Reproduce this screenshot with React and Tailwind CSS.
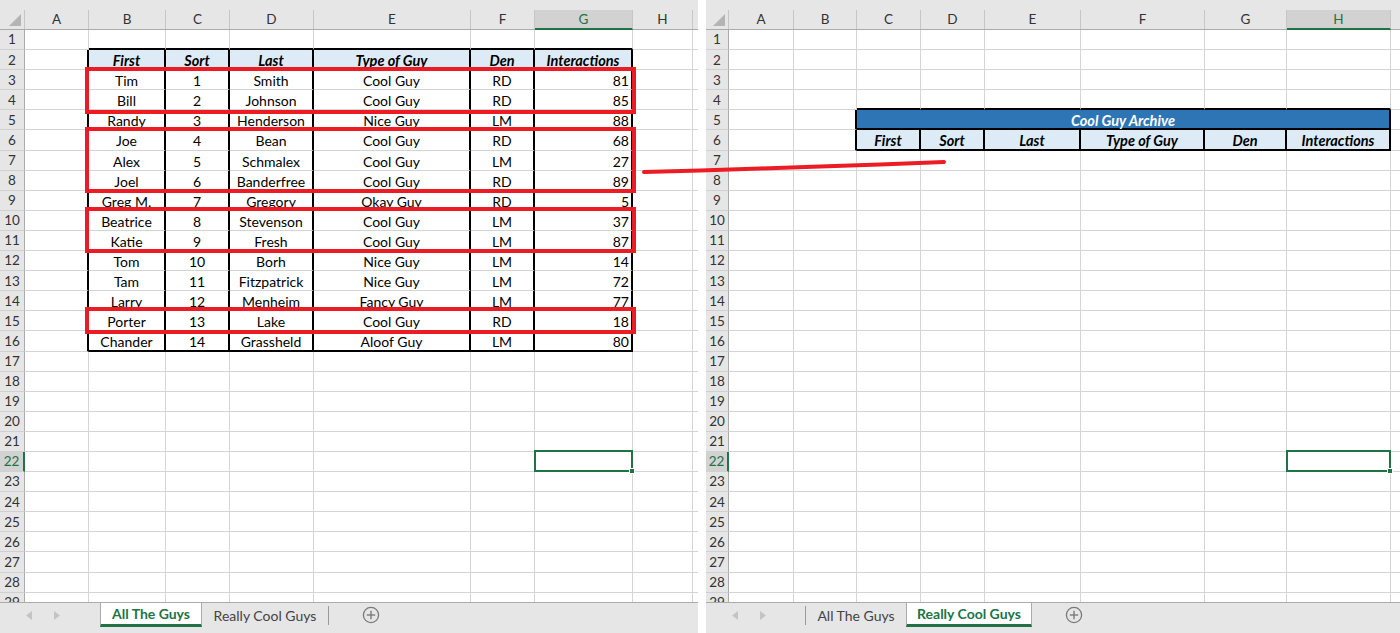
import React from 'react';

const LEFT_COLS = [
  { l: 'A', w: 'w-[64px]' },
  { l: 'B', w: 'w-[77px]' },
  { l: 'C', w: 'w-[64px]' },
  { l: 'D', w: 'w-[84px]' },
  { l: 'E', w: 'w-[157px]' },
  { l: 'F', w: 'w-[64px]' },
  { l: 'G', w: 'w-[98px]' },
  { l: 'H', w: 'w-[60px]' },
  { l: '', w: 'w-[64px]' },
];

const RIGHT_COLS = [
  { l: 'A', w: 'w-[65px]' },
  { l: 'B', w: 'w-[63px]' },
  { l: 'C', w: 'w-[64px]' },
  { l: 'D', w: 'w-[64px]' },
  { l: 'E', w: 'w-[96px]' },
  { l: 'F', w: 'w-[124px]' },
  { l: 'G', w: 'w-[82px]' },
  { l: 'H', w: 'w-[104px]' },
  { l: '', w: 'w-[64px]' },
];

const HEADERS = ['First', 'Sort', 'Last', 'Type of Guy', 'Den', 'Interactions'];

const DATA = [
  ['Tim', '1', 'Smith', 'Cool Guy', 'RD', '81'],
  ['Bill', '2', 'Johnson', 'Cool Guy', 'RD', '85'],
  ['Randy', '3', 'Henderson', 'Nice Guy', 'LM', '88'],
  ['Joe', '4', 'Bean', 'Cool Guy', 'RD', '68'],
  ['Alex', '5', 'Schmalex', 'Cool Guy', 'LM', '27'],
  ['Joel', '6', 'Banderfree', 'Cool Guy', 'RD', '89'],
  ['Greg M.', '7', 'Gregory', 'Okay Guy', 'RD', '5'],
  ['Beatrice', '8', 'Stevenson', 'Cool Guy', 'LM', '37'],
  ['Katie', '9', 'Fresh', 'Cool Guy', 'LM', '87'],
  ['Tom', '10', 'Borh', 'Nice Guy', 'LM', '14'],
  ['Tam', '11', 'Fitzpatrick', 'Nice Guy', 'LM', '72'],
  ['Larry', '12', 'Menheim', 'Fancy Guy', 'LM', '77'],
  ['Porter', '13', 'Lake', 'Cool Guy', 'RD', '18'],
  ['Chander', '14', 'Grassheld', 'Aloof Guy', 'LM', '80'],
];

const ROWS = Array.from({ length: 29 }, (_, i) => i + 1);

function Cell({ w, right, bottom, bg, align, hdr, white, sel, children }) {
  const rb = right === 'black' ? 'border-r-2 border-r-black' : 'border-r border-r-[#d4d4d4]';
  const bb = bottom === 'black' ? 'border-b-2 border-b-black' : 'border-b border-b-[#d4d4d4]';
  const al = align === 'right' ? 'justify-end pr-[2px]' : 'justify-center';
  return (
    <div className={`relative shrink-0 box-border flex items-start ${w} ${rb} ${bb} ${bg || ''} ${al}`}>
      {children != null && (
        <span
          className={`whitespace-nowrap leading-[20px] pt-[1px] ${
            hdr ? 'font-bold italic text-[14.5px]' : 'text-[14px]'
          } ${white ? 'text-white' : 'text-black'}`}
        >
          {children}
        </span>
      )}
      {sel && (
        <div className="absolute -left-[1px] -top-[2px] w-[calc(100%+2px)] h-[calc(100%+3px)] border-2 border-[#217346] z-10">
          <div className="absolute -right-[4px] -bottom-[4px] w-[6px] h-[6px] bg-[#217346] border border-white" />
        </div>
      )}
    </div>
  );
}

function leftCell(r, c) {
  const tc = c >= 1 && c <= 6;
  const tr = r >= 2 && r <= 16;
  const o = { right: 'grid', bottom: 'grid' };
  if (tr && (c === 0 || tc)) o.right = 'black';
  if (tc && (r === 1 || r === 2 || r === 16)) o.bottom = 'black';
  if (r === 2 && tc) {
    o.bg = 'bg-[#ddebf7]';
    o.hdr = true;
    o.content = HEADERS[c - 1];
  }
  if (r >= 3 && r <= 16 && tc) {
    o.content = DATA[r - 3][c - 1];
    if (c === 6) o.align = 'right';
  }
  if (r === 22 && c === 6) o.sel = true;
  return o;
}

function rightCell(r, c) {
  const tc = c >= 2 && c <= 7;
  const o = { right: 'grid', bottom: 'grid' };
  if (r === 4 && tc) o.bottom = 'black';
  if ((r === 5 || r === 6) && c === 1) o.right = 'black';
  if (r === 6 && tc) {
    o.right = 'black';
    o.bottom = 'black';
    o.bg = 'bg-[#ddebf7]';
    o.hdr = true;
    o.content = HEADERS[c - 2];
  }
  if (r === 22 && c === 7) o.sel = true;
  return o;
}

function ColHeader({ cols, rhw, selCol }) {
  return (
    <div className="flex h-[19px] shrink-0 bg-[#e6e6e6] border-b border-b-[#ababab] box-content">
      <div className={`${rhw} shrink-0 relative border-r border-r-[#c6c6c6]`}>
        <svg className="absolute right-[3px] bottom-[3px]" width="12" height="12" viewBox="0 0 12 12">
          <polygon points="12,0 12,12 0,12" fill="#b4b4b4" />
        </svg>
      </div>
      {cols.map((c, i) => (
        <div
          key={i}
          className={`${c.w} shrink-0 box-border flex items-center justify-center text-[13.5px] border-r border-r-[#c6c6c6] ${
            i === selCol
              ? 'bg-[#d2d2d2] text-[#217346] border-b-2 border-b-[#217346] -mb-px h-[20px]'
              : 'text-[#333]'
          }`}
        >
          {c.l}
        </div>
      ))}
    </div>
  );
}

function RowHeader({ rhw, r, sel }) {
  return (
    <div
      className={`${rhw} shrink-0 box-border flex items-center justify-center text-[13.5px] border-b border-b-[#d0d0d0] ${
        sel
          ? 'bg-[#d2d2d2] text-[#217346] border-r-2 border-r-[#217346]'
          : 'bg-[#e6e6e6] text-[#333] border-r border-r-[#ababab]'
      }`}
    >
      {r}
    </div>
  );
}

function Arrows() {
  return (
    <div className="flex items-center gap-[22px] pl-[26px]">
      <svg width="6" height="9" viewBox="0 0 6 9">
        <polygon points="6,0 6,9 0,4.5" fill="#c4c4c4" />
      </svg>
      <svg width="6" height="9" viewBox="0 0 6 9">
        <polygon points="0,0 0,9 6,4.5" fill="#c4c4c4" />
      </svg>
    </div>
  );
}

function PlusBtn() {
  return (
    <svg width="18" height="18" viewBox="0 0 18 18">
      <circle cx="9" cy="9" r="7.6" fill="none" stroke="#7a7a7a" strokeWidth="1.3" />
      <line x1="9" y1="4.8" x2="9" y2="13.2" stroke="#7a7a7a" strokeWidth="1.4" />
      <line x1="4.8" y1="9" x2="13.2" y2="9" stroke="#7a7a7a" strokeWidth="1.4" />
    </svg>
  );
}

function LeftTabs() {
  return (
    <div className="h-[32px] shrink-0 flex items-start bg-[#e6e6e6] border-t border-t-[#ababab]">
      <div className="w-[100px] h-[24px] flex items-center shrink-0">
        <Arrows />
      </div>
      <div className="w-[102px] h-[24px] shrink-0 box-border bg-white border-x border-x-[#ababab] border-b-[3px] border-b-[#217346] flex items-center justify-center text-[14px] font-bold text-[#217346]">
        All The Guys
      </div>
      <div className="w-[126px] h-[24px] shrink-0 flex items-center justify-center text-[14px] text-[#444]">
        Really Cool Guys
      </div>
      <div className="w-px h-[19px] mt-[3px] bg-[#9a9a9a] shrink-0" />
      <div className="ml-[33px] mt-[3px]">
        <PlusBtn />
      </div>
    </div>
  );
}

function RightTabs() {
  return (
    <div className="h-[32px] shrink-0 flex items-start bg-[#e6e6e6] border-t border-t-[#ababab]">
      <div className="w-[99px] h-[24px] flex items-center shrink-0">
        <Arrows />
      </div>
      <div className="w-px h-[19px] mt-[3px] bg-[#9a9a9a] shrink-0" />
      <div className="w-[100px] h-[24px] shrink-0 flex items-center justify-center text-[14px] text-[#444]">
        All The Guys
      </div>
      <div className="w-[126px] h-[24px] shrink-0 box-border bg-white border-x border-x-[#ababab] border-b-[3px] border-b-[#217346] flex items-center justify-center text-[14px] font-bold text-[#217346]">
        Really Cool Guys
      </div>
      <div className="ml-[33px] mt-[3px]">
        <PlusBtn />
      </div>
    </div>
  );
}

function LeftPane() {
  return (
    <div className="relative w-[698px] h-[633px] shrink-0 flex flex-col overflow-hidden">
      <div className="h-[10px] shrink-0 bg-[#e6e6e6]" />
      <ColHeader cols={LEFT_COLS} rhw="w-[25px]" selCol={6} />
      <div className="h-[572px] overflow-hidden shrink-0">
        {ROWS.map((r) => (
          <div key={r} className="flex h-[20.1px]">
            <RowHeader rhw="w-[25px]" r={r} sel={r === 22} />
            {LEFT_COLS.map((col, c) => {
              const o = leftCell(r, c);
              return (
                <Cell key={c} w={col.w} {...o}>
                  {o.content}
                </Cell>
              );
            })}
          </div>
        ))}
      </div>
      <LeftTabs />
      <div className="absolute left-[85px] top-[67px] w-[551px] h-[47px] border-4 border-[#ed1c24] pointer-events-none" />
      <div className="absolute left-[85px] top-[127px] w-[551px] h-[66px] border-4 border-[#ed1c24] pointer-events-none" />
      <div className="absolute left-[85px] top-[207px] w-[551px] h-[46px] border-4 border-[#ed1c24] pointer-events-none" />
      <div className="absolute left-[85px] top-[307px] w-[551px] h-[27px] border-4 border-[#ed1c24] pointer-events-none" />
    </div>
  );
}

function RightPane() {
  return (
    <div className="relative w-[694px] h-[633px] shrink-0 flex flex-col overflow-hidden">
      <div className="h-[10px] shrink-0 bg-[#e6e6e6]" />
      <ColHeader cols={RIGHT_COLS} rhw="w-[23px]" selCol={7} />
      <div className="h-[572px] overflow-hidden shrink-0">
        {ROWS.map((r) => (
          <div key={r} className="flex h-[20.1px]">
            <RowHeader rhw="w-[23px]" r={r} sel={r === 22} />
            {r === 5 ? (
              <>
                <Cell w={RIGHT_COLS[0].w} />
                <Cell w={RIGHT_COLS[1].w} right="black" />
                <Cell w="w-[534px]" right="black" bottom="black" bg="bg-[#2e75b6]" hdr white>
                  Cool Guy Archive
                </Cell>
                <Cell w={RIGHT_COLS[8].w} />
              </>
            ) : (
              RIGHT_COLS.map((col, c) => {
                const o = rightCell(r, c);
                return (
                  <Cell key={c} w={col.w} {...o}>
                    {o.content}
                  </Cell>
                );
              })
            )}
          </div>
        ))}
      </div>
      <RightTabs />
    </div>
  );
}

export default function App() {
  return (
    <div className="relative w-[1400px] h-[633px] flex bg-white overflow-hidden font-[Lato,sans-serif]">
      <LeftPane />
      <div className="w-[8px] shrink-0 bg-white" />
      <RightPane />
      <svg className="absolute left-0 top-0 pointer-events-none" width="1400" height="633" viewBox="0 0 1400 633">
        <polyline
          points="644,172 700,170.5 760,168.5 820,166.5 880,164.5 944,162"
          fill="none"
          stroke="#ed1c24"
          strokeWidth="4"
          strokeLinecap="round"
          strokeLinejoin="round"
        />
      </svg>
    </div>
  );
}
